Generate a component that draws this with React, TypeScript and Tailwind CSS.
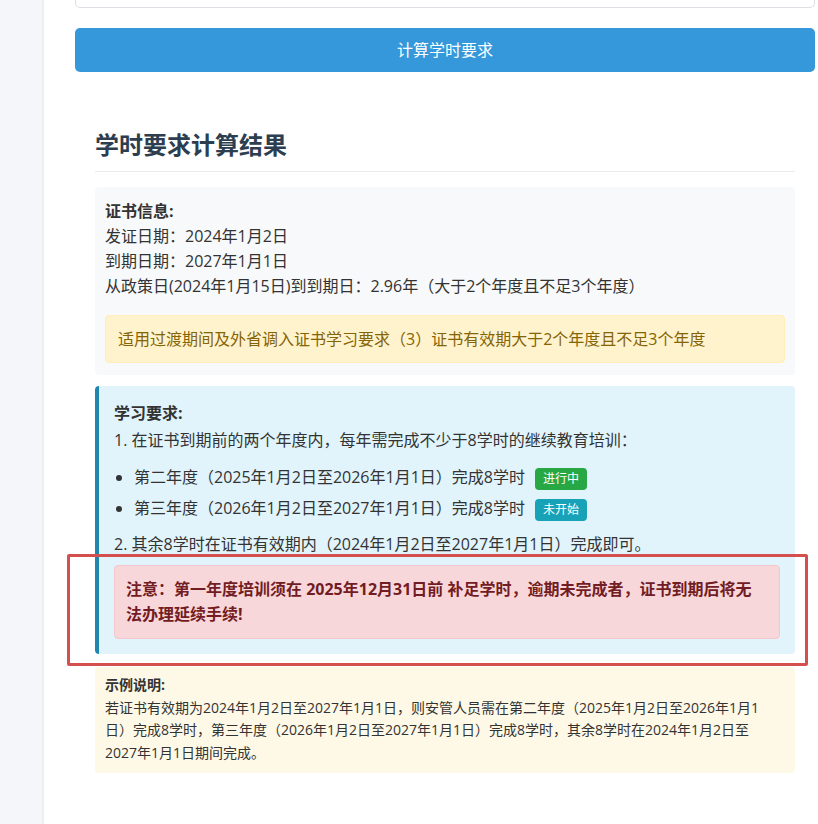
import React from "react";

export default function App() {
  return (
    <div className="flex min-h-[824px] w-[818px] overflow-hidden bg-white font-['Open_Sans','Noto_Sans_CJK_SC',sans-serif] text-[#333]">
      <div className="w-[44px] shrink-0 border-r-2 border-[#eceef1] bg-[#f4f6f9]" />
      <div className="flex-1 pl-[31px] pr-[3px]">
        <div className="h-[8px] rounded-b-[5px] border border-t-0 border-[#dcdfe3]" />
        <button className="mt-[20px] flex h-[44px] w-full items-center justify-center rounded-[5px] bg-[#3498db] text-[16px] text-white">
          计算学时要求
        </button>

        <div className="px-[20px] pt-[56px]">
          <div className="border-b border-[#e9ecef] pb-[9px]">
            <h2 className="text-[24px] font-bold leading-[34px] text-[#2c3e50]">学时要求计算结果</h2>
          </div>

          <div className="mt-[15px] rounded-[4px] bg-[#f8f9fa] px-[10px] pb-[12px] pt-[12px] text-[16px] leading-[25px]">
            <div className="font-bold">证书信息:</div>
            <div>发证日期：2024年1月2日</div>
            <div>到期日期：2027年1月1日</div>
            <div>从政策日(2024年1月15日)到到期日：2.96年（大于2个年度且不足3个年度）</div>
            <div className="mt-[16px] rounded-[4px] border border-[#ffeeba] bg-[#fff3cd] px-[12px] py-[11px] leading-[24px] text-[#856404]">
              适用过渡期间及外省调入证书学习要求（3）证书有效期大于2个年度且不足3个年度
            </div>
          </div>

          <div className="relative mt-[11px] rounded-[4px] border-l-4 border-[#1f86ad] bg-[#e1f4fc] py-[15px] pl-[15px] pr-[15px] text-[16px] leading-[25px]">
            <div className="font-bold">学习要求:</div>
            <div className="mt-[2px]">1. 在证书到期前的两个年度内，每年需完成不少于8学时的继续教育培训：</div>
            <ul className="mb-[8px] mt-[9px] list-disc pl-[20px]">
              <li className="leading-[31px]">
                第二年度（2025年1月2日至2026年1月1日）完成8学时
                <span className="ml-[10px] inline-block rounded-[4px] bg-[#28a745] px-[8px] align-middle text-[12px] leading-[22px] text-white">进行中</span>
              </li>
              <li className="leading-[31px]">
                第三年度（2026年1月2日至2027年1月1日）完成8学时
                <span className="ml-[10px] inline-block rounded-[4px] bg-[#17a2b8] px-[8px] align-middle text-[12px] leading-[22px] text-white">未开始</span>
              </li>
            </ul>
            <div>2. 其余8学时在证书有效期内（2024年1月2日至2027年1月1日）完成即可。</div>
            <div className="mt-[8px] rounded-[4px] border border-[#f5c6cb] bg-[#f8d7da] py-[11px] pl-[11px] pr-[14px] font-bold text-[#721c24]">
              注意：第一年度培训须在 2025年12月31日前 补足学时，逾期未完成者，证书到期后将无法办理延续手续!
            </div>
            <div className="pointer-events-none absolute bottom-[-12px] left-[-32px] right-[-13px] h-[112px] rounded-[2px] border-[3px] border-[#d4504f]" />
          </div>

          <div className="mt-[13px] rounded-[4px] bg-[#fef9e7] px-[10px] pb-[9px] pt-[7px] text-[14px] leading-[22.5px]">
            <div className="font-bold">示例说明:</div>
            <div>
              若证书有效期为2024年1月2日至2027年1月1日，则安管人员需在第二年度（2025年1月2日至2026年1月1
              <br />
              日）完成8学时，第三年度（2026年1月2日至2027年1月1日）完成8学时，其余8学时在2024年1月2日至
              <br />
              2027年1月1日期间完成。
            </div>
          </div>
        </div>
      </div>
    </div>
  );
}
